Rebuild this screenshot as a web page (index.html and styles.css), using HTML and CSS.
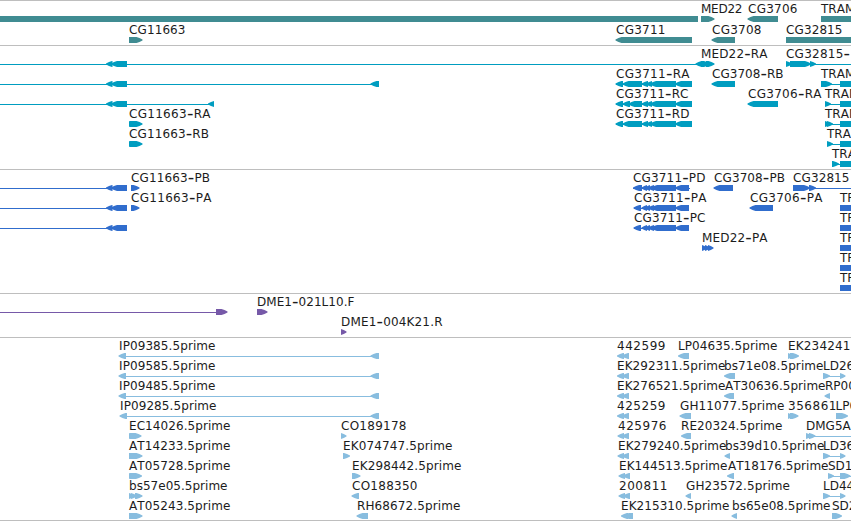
FILE: index.html
```html
<!DOCTYPE html>
<html lang="en">
<head>
<meta charset="utf-8">
<title>Genome region</title>
<link rel="stylesheet" href="styles.css">
</head>
<body>
<main class="browser" id="browser"></main>
<script src="tracks.js"></script>
</body>
</html>
```
FILE: styles.css
```css
body {
  margin: 0;
  background: #fff;
}

.browser {
  display: flex;
  flex-direction: column;
  width: 851px;
  height: 521px;
  overflow: hidden;
  box-sizing: border-box;
  border-bottom: 1px solid #bebebe;
}

.track {
  flex: none;
  border-top: 1px solid #bebebe;
}

.track svg {
  display: block;
  width: 851px;
  height: 100%;
}

.gene { height: 44px; color: #408c92; }
.transcript { height: 123px; color: #009dc0; }
.protein { height: 123px; color: #306dcd; }
.clone { height: 43px; color: #7659a8; }
.est { height: 182px; color: #88bddf; }

.shape { fill: currentColor; }

.label {
  fill: #1c1c1c;
  font: 12px "DejaVu Sans", sans-serif;
  font-kerning: none;
}

.dash { font-size: 18px; }
```
FILE: tracks.js
```js
// Row: { l: labels [text, start, end], n: connector lines [start, end],
//        b: plain bars, f: forward features, r: reverse features }
const tail = { r: [[106, 112.5], [111, 127]] };
const exons = [[641.5, 648], [646, 652], [650, 676], [675, 692]];
const cds = [[641.5, 647], [645, 650], [648, 654], [651, 676], [675, 689]];
const end = [840, 860];

const tracks = [
  { kind: "gene", pitch: 21, rows: [
    { l: [["MED22", 701, 742], ["CG3706", 748, 797], ["TRAM", 821]],
      b: [[0, 698], [821, 860]], f: [[701, 714.5]], r: [[747.5, 778]] },
    { l: [["CG11663", 129, 185], ["CG3711", 616, 665], ["CG3708", 712, 761], ["CG32815", 786, 842]],
      b: [[786, 860]], f: [[129, 142.5]], r: [[615.5, 692], [711.5, 735]] }
  ] },
  { kind: "transcript", pitch: 20, rows: [
    { l: [["MED22-RA", 701, 767], ["CG32815-", 786, 849.5]], n: [[0, 700], [786, 851]],
      r: [...tail.r, [695.5, 704]], f: [[701, 707], [704, 710], [706, 714.5], [786, 792], [790, 811], [810, 816]] },
    { l: [["CG3711-RA", 616, 689], ["CG3708-RB", 712, 783], ["TRAM", 821]], n: [[0, 379], [616, 692], [821, 851]],
      r: [...tail.r, [370.5, 379], [615.5, 623], [622.5, 642], ...exons, [711.5, 735]], f: [[821, 832]], b: [end] },
    { l: [["CG3711-RC", 616, 688], ["CG3706-RA", 748, 821], ["TRAM", 825]], n: [[0, 214], [616, 692], [825, 851]],
      r: [...tail.r, [208, 214], [615.5, 623], [622.5, 630], [628.5, 642], ...exons, [747.5, 778]], f: [[825, 831]], b: [end] },
    { l: [["CG11663-RA", 129, 210], ["CG3711-RD", 616, 689], ["TRAM", 825]], n: [[616, 692], [825, 851]],
      f: [[129, 135], [130, 142.5], [825, 831], [827, 833]], r: [[615.5, 623], [622.5, 642], ...exons], b: [end] },
    { l: [["CG11663-RB", 129, 208.5], ["TRAM", 827]], n: [[827, 851]], f: [[129, 135], [130, 142.5], [827, 833]], b: [end] },
    { l: [["TRAM", 832]], n: [[832, 851]], f: [[832, 839]], b: [end] }
  ] },
  { kind: "protein", pitch: 20, rows: [
    { l: [["CG11663-PB", 131, 209.5], ["CG3711-PD", 633, 705], ["CG3708-PB", 714, 784.5], ["CG32815", 793, 849]],
      n: [[0, 127], [633, 690], [793, 851]], r: [...tail.r, [633, 642], ...cds, [713.5, 733]],
      f: [[131, 139.5], [793, 810], [809, 816]] },
    { l: [["CG11663-PA", 131, 211], ["CG3711-PA", 634, 706], ["CG3706-PA", 750, 822], ["TR", 840]],
      n: [[0, 127], [634, 689]], r: [...tail.r, [633.5, 641], ...cds, [749.5, 773]], f: [[131, 139.5]], b: [end] },
    { l: [["CG3711-PC", 634, 705], ["TR", 840]], n: [[0, 127], [634, 689]],
      r: [...tail.r, [633.5, 641], ...cds], b: [end] },
    { l: [["MED22-PA", 702, 767], ["TR", 840]], f: [[702, 707], [705, 710], [708, 713.5]], b: [end] },
    { l: [["TR", 840]], b: [end] },
    { l: [["TR", 840]], b: [end] }
  ] },
  { kind: "clone", pitch: 20, rows: [
    { l: [["DME1-021L10.F", 257, 354]], n: [[0, 220]], f: [[216, 227.5], [257, 267.5]] },
    { l: [["DME1-004K21.R", 341, 442]], f: [[341, 346.5]] }
  ] },
  { kind: "est", pitch: 20, rows: [
    { l: [["IP09385.5prime", 119, 215], ["442599", 617, 665], ["LP04635.5prime", 678, 777], ["EK234241", 788, 850]],
      n: [[120, 379]], r: [[118.5, 126], [370.5, 379], [617, 624], [622, 629], [678, 689]], f: [[788, 793], [790, 799]] },
    { l: [["IP09585.5prime", 119, 215], ["EK292311.5prime", 617, 725], ["bs71e08.5prime", 724, 823], ["LD26", 823]],
      n: [[120, 379], [823, 845]], r: [[118.5, 126], [370.5, 379], [617, 624], [622, 629], [724, 735]], f: [[823, 830], [840, 845.5]] },
    { l: [["IP09485.5prime", 119, 215], ["EK276521.5prime", 617, 725], ["AT30636.5prime", 725, 825], ["RP00", 825]],
      n: [[120, 379]], r: [[118.5, 126], [370.5, 379], [617, 624], [622, 629], [724, 734], [824.5, 830]] },
    { l: [["IP09285.5prime", 120, 216], ["425259", 617, 665], ["GH11077.5prime", 680, 784], ["356861", 788, 836], ["LP0", 835.5]],
      n: [[121, 379]], r: [[119.5, 127], [370.5, 379], [617, 624], [622, 629], [679.5, 691]], f: [[788, 793], [790, 798.5], [836, 848]] },
    { l: [["EC14026.5prime", 129, 230], ["CO189178", 341, 406], ["425976", 618, 666], ["RE20324.5prime", 681, 782], ["DMG5A", 806]],
      n: [[806, 851]], f: [[129, 135], [130, 141.5], [341, 346.5], [806, 812], [809, 815.5]], r: [[617.5, 624], [622, 629], [681, 691]] },
    { l: [["AT14233.5prime", 129, 230], ["EK074747.5prime", 343, 452], ["EK279240.5prime", 618, 726], ["bs39d10.5prime", 725, 824], ["LD36", 823]],
      n: [[823, 845]], f: [[129, 142.5], [343, 350], [823, 830], [840, 845.5]], r: [[617.5, 624], [622, 629], [724.5, 730]] },
    { l: [["AT05728.5prime", 129, 230], ["EK298442.5prime", 352, 461], ["EK144513.5prime", 619, 727], ["AT18176.5prime", 728, 828], ["SD1", 828]],
      n: [[828, 851]], f: [[129, 135], [130, 142], [352, 360.5], [828, 834], [840, 850.5]], r: [[618.5, 625], [623, 630], [727, 734]] },
    { l: [["bs57e05.5prime", 129, 227], ["CO188350", 352, 417], ["200811", 619, 667], ["GH23572.5prime", 686, 789.5], ["LD44", 823]],
      n: [[823, 845]], f: [[129, 135], [131, 137], [135, 142.5], [823, 830], [840, 845.5]], r: [[351.5, 359], [618.5, 625], [623, 630], [685.5, 691]] },
    { l: [["AT05243.5prime", 129, 230], ["RH68672.5prime", 357, 460], ["EK215310.5prime", 621, 729], ["bs65e08.5prime", 732, 830], ["SD2", 832]],
      f: [[129, 142.5], [832, 842]], r: [[356.5, 368], [621, 628], [623, 633], [731.5, 737]] }
  ] }
];

const rect = (x0, x1, y, h) =>
  `<rect class="shape" x="${x0}" y="${y}" width="${x1 - x0}" height="${h}"/>`;

// Block whose leading edge tapers to a blunt point at the tip coordinate.
function arrow(tip, base, y) {
  const d = Math.sign(base - tip);
  const head = Math.min(6, Math.abs(base - tip));
  const mid = tip + d * head * 0.5;
  const neck = tip + d * head;
  return `<polygon class="shape" points="${tip},${y + 2.6} ${mid},${y + 1} ${neck},${y} ${base},${y} ${base},${y + 6} ${neck},${y + 6} ${mid},${y + 5} ${tip},${y + 3.6}"/>`;
}

// The hyphen is set larger than the rest of the name and lowered to stay centred.
function label([text, a, b], y) {
  const fit = b ? ` textLength="${b - a + 0.5}"` : "";
  const [head, rest] = text.split("-");
  const body = rest === undefined
    ? head
    : `${head}<tspan class="dash" dy="1">-</tspan><tspan dy="-1">${rest}</tspan>`;
  return `<text class="label" x="${a}" y="${y}"${fit}>${body}</text>`;
}

function drawRow(row, y) {
  const out = [];
  for (const [a, b] of row.n || []) out.push(rect(a, b, y + 18, 1));
  for (const [a, b] of row.b || []) out.push(rect(a, b, y + 15, 6));
  for (const [a, b] of row.f || []) out.push(arrow(b, a, y + 15));
  for (const [a, b] of row.r || []) out.push(arrow(a, b, y + 15));
  for (const item of row.l || []) out.push(label(item, y + 12));
  return out.join("");
}

document.getElementById("browser").innerHTML = tracks.map(t =>
  `<section class="track ${t.kind}"><svg>${t.rows.map((r, i) => drawRow(r, i * t.pitch)).join("")}</svg></section>`
).join("");
```
